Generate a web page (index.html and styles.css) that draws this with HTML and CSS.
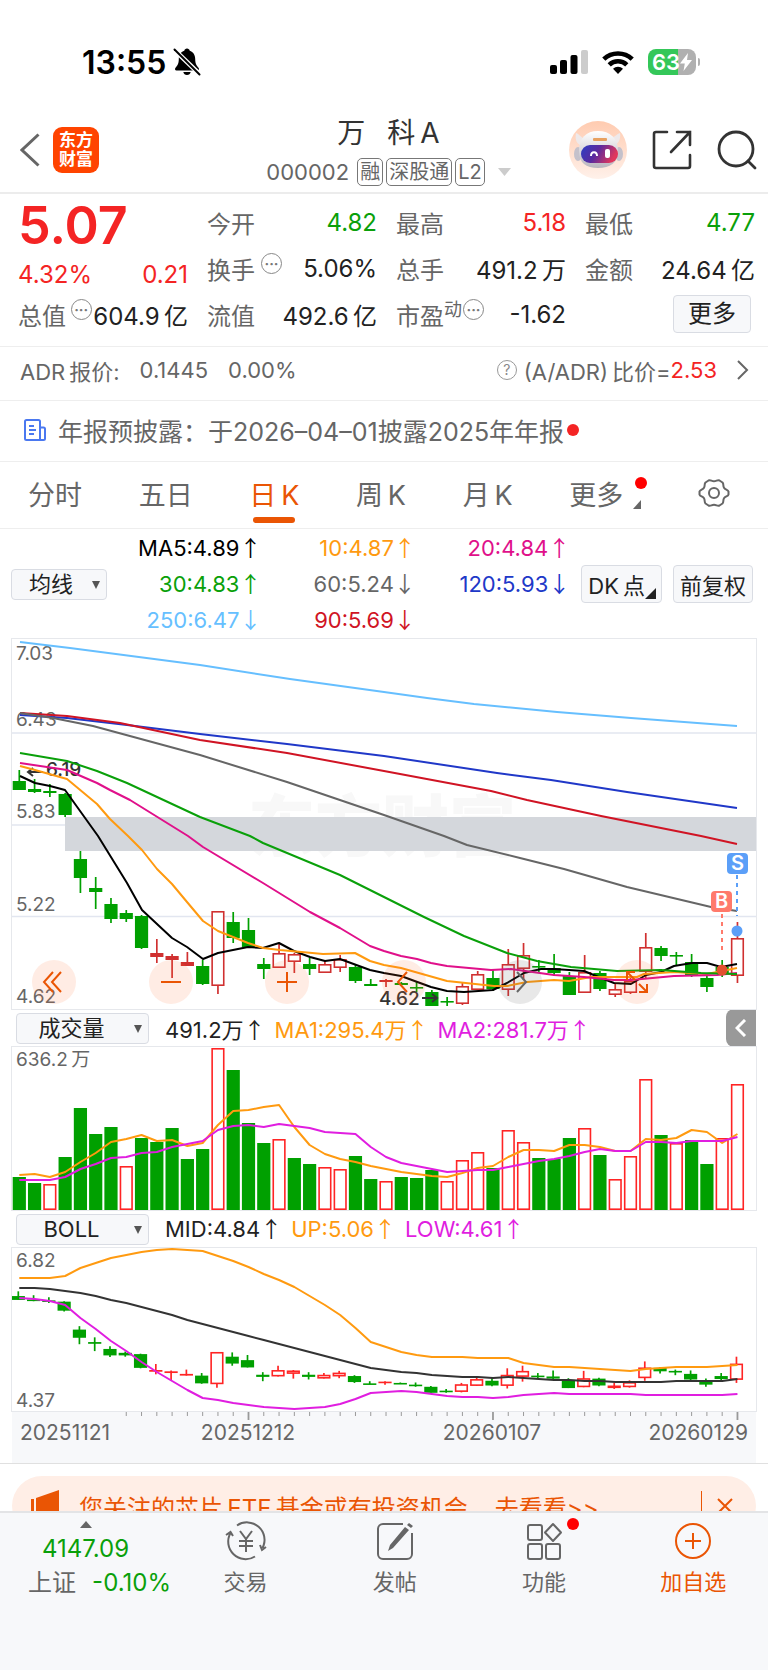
FILE: index.html
```html
<!DOCTYPE html>
<html lang="zh-CN">
<head>
    <meta charset="UTF-8">
    <meta name="viewport" content="width=device-width, initial-scale=1.0, viewport-fit=cover">
    <title>万科A 000002</title>
    <link rel="stylesheet" href="styles.css">
</head>
<body>
    <div class="status-bar">
        <div class="status-left">
            <span class="time">13:55</span>
            <svg width="28" height="28" viewBox="0 0 28 28">
                <path d="M14 0.500c-1.500 0-2.500 1-2.700 2.200C7.800 3.800 5.800 7 5.800 11c0 4.500-1.300 6.500-3.300 8.700-1 1.200-.5 2.800 1 2.800h21c1.500 0 2-1.600 1-2.800-2-2.200-3.300-4.200-3.300-8.700 0-4-2-7.200-5.500-8.300C16.500 1.500 15.500.5 14 .5zM10.300 24a3.800 3.800 0 0 0 7.400 0z" fill="#000"/>
                <path d="M1 1.500L27 26.500" stroke="#fff" stroke-width="4.600"/>
                <path d="M1.500 1.500L26.500 26.500" stroke="#000" stroke-width="2" stroke-linecap="round"/>
            </svg>
        </div>
        <div class="status-right">
            <svg width="38" height="24" viewBox="0 0 38 24">
                <rect x="0" y="15" width="7" height="9" rx="2"/>
                <rect x="10" y="10" width="7" height="14" rx="2"/>
                <rect x="20.500" y="5" width="7" height="19" rx="2"/>
                <rect x="31" y="0" width="7" height="24" rx="2" fill="#ccc"/>
            </svg>
            <svg width="32" height="24" viewBox="0 0 32 24" fill="none" stroke="#000" stroke-width="4.600">
                <path d="M1.800 9.200a20.500 20.500 0 0 1 28.400 0"/>
                <path d="M7.200 14.800a12.700 12.700 0 0 1 17.600 0"/>
                <path d="M16 24l-5-5.300a7.200 7.200 0 0 1 10 0z" fill="#000" stroke="none"/>
            </svg>
            <div class="battery">
                <span>63</span>
                <svg width="12" height="18" viewBox="0 0 12 18"><path d="M8 0L0 10.500h4.800L3.500 18 12 7H7z" fill="#fff"/></svg>
            </div>
        </div>
    </div>

    <header class="header">
        <div class="header-left">
            <button class="icon-btn" aria-label="返回">
                <svg width="20" height="34" viewBox="0 0 20 34" fill="none" stroke="#666" stroke-width="3"><path d="M18.500 1.500L2 17l16.500 15.500"/></svg>
            </button>
            <a class="logo" href="#">东方<br>财富</a>
        </div>
        <div class="header-title">
            <h1>万&ensp; 科&thinsp;A</h1>
            <div class="stock-code">
                <span class="code">000002</span>
                <span class="tag">融</span>
                <span class="tag">深股通</span>
                <span class="tag">L2</span>
                <svg class="code-arrow" width="13" height="8" viewBox="0 0 13 8"><path d="M0 0h13L6.500 8z" fill="#ccc"/></svg>
            </div>
        </div>
        <div class="header-right">
            <button class="icon-btn" aria-label="智能助手">
                <svg width="58" height="58" viewBox="0 0 58 58">
                    <defs>
                        <linearGradient id="halo" x1="0" y1="0" x2="0" y2="1"><stop offset="0" stop-color="#ffcbb0"/><stop offset="1" stop-color="#fff1ea"/></linearGradient>
                        <linearGradient id="visor" x1="0" y1="0" x2="1" y2="0.300"><stop offset="0" stop-color="#2b3fc4"/><stop offset="0.500" stop-color="#5b2a9e"/><stop offset="1" stop-color="#e0365c"/></linearGradient>
                        <linearGradient id="shell" x1="0" y1="0" x2="0" y2="1"><stop offset="0" stop-color="#fff"/><stop offset="1" stop-color="#b9b6be"/></linearGradient>
                    </defs>
                    <circle cx="29" cy="29" r="29" fill="url(#halo)"/>
                    <path d="M11 24c-4-2-5-7-4-12 3 1 5 4 8 6M46 24c4-2 6-7 5-12-3 1-6 4-9 6" fill="#eee9ea"/>
                    <ellipse cx="9" cy="33" rx="4" ry="7" fill="#c4c1cb"/>
                    <ellipse cx="50" cy="33" rx="4" ry="7" fill="#c4c1cb"/>
                    <path d="M29 10c-12 0-19 7-19 20 0 12 7 17 19 17s20-5 20-17c0-13-8-20-20-20z" fill="url(#shell)"/>
                    <rect x="24" y="17" width="14" height="3" rx="1" fill="#e8a160"/>
                    <rect x="12" y="24" width="37" height="18" rx="9" fill="url(#visor)"/>
                    <path d="M22 35c0-5 6-5 6 0" fill="none" stroke="#fff" stroke-width="2"/>
                    <rect x="36" y="28" width="5" height="9" rx="2" fill="#fff"/>
                </svg>
            </button>
            <button class="icon-btn" aria-label="分享">
                <svg width="40" height="40" viewBox="0 0 40 40" fill="none" stroke="#333" stroke-width="2.600" stroke-linecap="round">
                    <path d="M15 2H4a2 2 0 0 0-2 2v32a2 2 0 0 0 2 2h32a2 2 0 0 0 2-2V25M25 2h13v13M38 2L19 22"/>
                </svg>
            </button>
            <button class="icon-btn" aria-label="搜索">
                <svg width="40" height="40" viewBox="0 0 40 40" fill="none" stroke="#333" stroke-width="2.800" stroke-linecap="round">
                    <circle cx="19" cy="19" r="17"/><path d="M31 31l7 7"/>
                </svg>
            </button>
        </div>
    </header>

    <section class="quote">
        <div class="quote-col">
            <div class="price">5.07</div>
            <div class="change"><span>4.32%</span><span>0.21</span></div>
            <div class="quote-row"><span class="label">总值</span><i class="more-dot">···</i><span>604.9&thinsp;亿</span></div>
        </div>
        <div class="quote-col">
            <div class="quote-row"><span class="label">今开</span><span class="green">4.82</span></div>
            <div class="quote-row"><span class="label">换手</span><i class="more-dot">···</i><span>5.06%</span></div>
            <div class="quote-row"><span class="label">流值</span><span>492.6&thinsp;亿</span></div>
        </div>
        <div class="quote-col">
            <div class="quote-row"><span class="label">最高</span><span class="red">5.18</span></div>
            <div class="quote-row"><span class="label">总手</span><span>491.2&thinsp;万</span></div>
            <div class="quote-row pe"><span class="label">市盈<sup>动</sup></span><i class="more-dot">···</i><span>-1.62</span></div>
        </div>
        <div class="quote-col">
            <div class="quote-row"><span class="label">最低</span><span class="green">4.77</span></div>
            <div class="quote-row"><span class="label">金额</span><span>24.64&thinsp;亿</span></div>
            <div class="quote-row"><button class="box-btn more-btn">更多</button></div>
        </div>
    </section>

    <section class="adr">
        <span>ADR&thinsp;报价:</span>
        <span>0.1445</span>
        <span>0.00%</span>
        <span class="adr-ratio"><i class="question">?</i>(A/ADR)&thinsp;比价=<b>2.53</b></span>
        <svg width="12" height="20" viewBox="0 0 12 20" fill="none" stroke="#666" stroke-width="2"><path d="M1 1l9 9-9 9"/></svg>
    </section>

    <section class="notice">
        <svg width="22" height="22" viewBox="0 0 22 22" fill="none" stroke="#4a78f0" stroke-width="2">
            <path d="M16 21H2.500A1.500 1.500 0 0 1 1 19.500v-17A1.500 1.500 0 0 1 2.500 1h12A1.500 1.500 0 0 1 16 2.500zM16 8.500h3.500A1.500 1.500 0 0 1 21 10v9.500a1.500 1.500 0 0 1-1.500 1.500H16M5 7h5M5 11h7M5 15h5"/>
        </svg>
        <a href="#">年报预披露：于2026–04–01披露2025年年报</a>
        <i class="dot"></i>
    </section>

    <nav class="tabs">
        <button class="tab">分时</button>
        <button class="tab">五日</button>
        <button class="tab active">日&thinsp;K</button>
        <button class="tab">周&thinsp;K</button>
        <button class="tab">月&thinsp;K</button>
        <button class="tab tab-more">更多<i class="dot"></i></button>
        <button class="tab" aria-label="设置">
            <svg width="32" height="32" viewBox="0 0 32 32" fill="none" stroke="#666" stroke-width="2" stroke-linejoin="round">
                <path d="M10.500 3.500c2-1 3 .8 5.500.8s3.500-1.800 5.500-.8l3 2c1.500 1.500.2 3 1.500 5.200 1.200 2 4 1.800 4.500 3.800v3c-.5 2-3.300 1.800-4.500 3.800-1.300 2.200 0 3.700-1.500 5.200l-3 2c-2 1-3-.8-5.500-.8s-3.500 1.800-5.500.8l-3-2c-1.500-1.500-.2-3-1.500-5.200-1.200-2-4-1.800-4.500-3.800v-3c.5-2 3.300-1.800 4.500-3.800 1.300-2.200 0-3.700 1.500-5.200z"/>
                <circle cx="16" cy="16" r="5"/>
            </svg>
        </button>
    </nav>

    <section class="ma-bar">
        <label class="select-box"><select aria-label="主图指标"><option>均线</option></select></label>
        <div class="ma-values">
            <span class="ma5">MA5:4.89<i>↑</i></span>
            <span class="ma10">10:4.87<i>↑</i></span>
            <span class="ma20">20:4.84<i>↑</i></span>
            <span class="ma30">30:4.83<i>↑</i></span>
            <span class="ma60">60:5.24<i>↓</i></span>
            <span class="ma120">120:5.93<i>↓</i></span>
            <span class="ma250">250:6.47<i>↓</i></span>
            <span class="ma90">90:5.69<i>↓</i></span>
        </div>
        <button class="box-btn dk-btn">DK&thinsp;点</button>
        <button class="box-btn">前复权</button>
    </section>

    <main class="charts">
        <div class="price-chart">
            <svg class="chart" viewBox="0 0 744 370">
                <text class="watermark" x="236" y="212">东方财富</text>
                <rect x="53" y="178" width="691" height="34" fill="#d4d7dc"/>
                <path class="grid" d="M0 94h744M0 186h53M0 277.500h744"/>
                <g class="axis-label">
                    <text x="4" y="21">7.03</text>
                    <text x="4" y="87">6.43</text>
                    <text x="4" y="179">5.83</text>
                    <text x="4" y="272">5.22</text>
                    <text x="4" y="364">4.62</text>
                </g>
                <g id="candles"></g>
                <g class="mark-label">
                    <text x="34" y="137">6.19</text>
                    <path d="M31 133H16M21 129l-5 4 5 4"/>
                    <text x="367" y="366">4.62</text>
                    <path d="M410 359h15M420 355l5 4-5 4"/>
                </g>
                <g class="line">
                    <polyline stroke="#66bfff" points="8,3 58,9 188,26 278,40 372,53 415,59 462,65 545,73 619,79 725,87"/>
                    <polyline stroke="#2038c8" points="8,76 55,79 115,86 188,95 275,105 372,117 485,134 539,141 615,153 725,169"/>
                    <polyline stroke="#d01424" points="8,74 55,77 108,84 188,101 275,114 372,132 479,152 515,161 589,177 639,187 689,197 725,205"/>
                    <polyline stroke="#666" points="8,74 41,79 81,87 188,116 275,143 372,176 432,197 455,206 512,220 552,230 615,248 699,268 725,272"/>
                    <polyline stroke="#000" points="8,137 23,144 38,147 53,151 86,197 115,244 130,271 160,299 175,308 191,320 206,314 236,308 251,309 267,304 282,312 298,318 313,322 328,320 358,331 372,334 389,337 419,348 435,352 452,353 481,351 495,344 512,334 529,330 542,330 572,332 589,339 602,344 619,345 634,336 649,333 662,327 680,324 695,324 709,328 725,325"/>
                    <polyline stroke="#ff9a10" points="8,127 23,131 55,140 85,165 98,180 116,197 130,211 145,230 160,245 175,263 191,282 206,292 236,304 251,309 268,311 311,315 343,314 358,322 372,326 389,329 435,342 482,347 495,347 515,343 542,341 557,342 579,338 625,338 632,335 662,333 695,335 725,329"/>
                    <polyline stroke="#e0108a" points="8,124 55,131 85,144 98,151 118,161 176,197 191,208 251,244 298,273 328,289 358,307 372,312 389,317 405,320 419,324 435,327 479,331 499,330 542,336 572,338 602,341 619,341 662,337 705,336 725,334"/>
                    <polyline stroke="#0aa00a" points="8,114 55,122 85,132 115,144 188,178 238,197 251,204 328,236 372,258 412,278 452,297 495,314 525,322 559,328 605,332 649,331 689,334 725,335"/>
                </g>
                <g class="trade-mark">
                    <path d="M725 236v41" stroke="#5b9ff8"/>
                    <path d="M710 275v39" stroke="#ff7a6b"/>
                    <circle cx="725" cy="292" r="5.500" fill="#5b9ff8"/>
                    <circle cx="710" cy="331" r="5.500" fill="#e2512f"/>
                    <rect x="715" y="214" width="21" height="21" rx="4" fill="#5b9ff8"/>
                    <rect x="699" y="252" width="21" height="21" rx="4" fill="#ff7a6b"/>
                    <text x="725.500" y="231">S</text>
                    <text x="709.500" y="269">B</text>
                </g>
            </svg>
            <div class="chart-tools">
                <button aria-label="最早"><svg viewBox="0 0 44 44"><path d="M21 12L12 22l9 10M29 12l-9 10 9 10"/></svg></button>
                <button aria-label="缩小"><svg viewBox="0 0 44 44"><path d="M12 22h20"/></svg></button>
                <button aria-label="放大"><svg viewBox="0 0 44 44"><path d="M12 22h20M22 12v20"/></svg></button>
                <button aria-label="左移"><svg viewBox="0 0 44 44"><path d="M25 12l-9 10 9 10"/></svg></button>
                <button class="disabled" aria-label="右移"><svg viewBox="0 0 44 44"><path d="M19 12l9 10-9 10"/></svg></button>
                <button aria-label="全屏"><svg viewBox="0 0 44 44"><path d="M12 20v-8h8M12 12l8 8M32 24v8h-8M32 32l-8-8"/></svg></button>
            </div>
        </div>

        <div class="indicator-bar">
            <label class="select-box wide"><select aria-label="副图指标一"><option>成交量</option></select></label>
            <span>491.2万<i>↑</i></span>
            <span class="ma10">MA1:295.4万<i>↑</i></span>
            <span class="purple">MA2:281.7万<i>↑</i></span>
            <button class="fold-btn" aria-label="展开"><svg width="12" height="18" viewBox="0 0 12 18" fill="none" stroke="#fff" stroke-width="3"><path d="M10 1L2 9l8 8"/></svg></button>
        </div>
        <svg class="chart" viewBox="0 0 744 163">
            <g class="axis-label"><text x="4" y="19">636.2&thinsp;万</text></g>
            <g id="volumes"></g>
            <g id="volume-lines" class="line"></g>
        </svg>

        <div class="indicator-bar">
            <label class="select-box wide"><select aria-label="副图指标二"><option>BOLL</option></select></label>
            <span>MID:4.84<i>↑</i></span>
            <span class="ma10">UP:5.06<i>↑</i></span>
            <span class="purple">LOW:4.61<i>↑</i></span>
        </div>
        <svg class="chart" viewBox="0 0 744 163">
            <g class="axis-label"><text x="4" y="19">6.82</text><text x="4" y="159">4.37</text></g>
            <g id="boll-candles"></g>
            <g id="boll-lines" class="line"></g>
        </svg>
        <svg class="date-axis" viewBox="0 0 744 53">
            <g id="ticks" stroke="#999"></g>
            <text x="8" y="29">20251121</text>
            <text x="236" y="29" text-anchor="middle">20251212</text>
            <text x="480" y="29" text-anchor="middle">20260107</text>
            <text x="736" y="29" text-anchor="end">20260129</text>
        </svg>
    </main>

    <aside class="banner">
        <svg width="30" height="32" viewBox="0 0 30 32" fill="#ea5504"><path d="M0 9h3v14H0zM5 8L28 0v32L5 24z"/></svg>
        <span>您关注的芯片&thinsp;ETF&thinsp;基金或有投资机会</span>
        <a href="#">去看看&gt;&gt;</a>
        <button class="banner-close" aria-label="关闭">
            <svg width="16" height="16" viewBox="0 0 16 16" stroke="#ea5504" stroke-width="2"><path d="M1 1l14 14M15 1L1 15"/></svg>
        </button>
    </aside>

    <footer class="bottom-nav">
        <a class="index" href="#">
            <svg width="12" height="7" viewBox="0 0 12 7"><path d="M6 0l6 7H0z" fill="#666"/></svg>
            <span class="green">4147.09</span>
            <span class="index-row">上证 <em class="green">-0.10%</em></span>
        </a>
        <a class="nav-item" href="#">
            <svg width="42" height="40" viewBox="0 0 42 40" fill="none" stroke="#666" stroke-width="2">
                <path d="M12 4.500A17.500 17.500 0 0 1 37.500 27M30 35.500A17.500 17.500 0 0 1 5.500 12M1 14l4.500-3 2.500 4M41 26l-4 3-2-5M15 10l6 8 6-8M21 18v13M14 20h14M14 25h14"/>
            </svg>
            交易
        </a>
        <a class="nav-item" href="#">
            <svg width="40" height="40" viewBox="0 0 40 40" fill="none" stroke="#666" stroke-width="2">
                <path d="M28 3H8a5 5 0 0 0-5 5v25a5 5 0 0 0 5 5h24a5 5 0 0 0 5-5V12"/>
                <path d="M30 6l4 3-16 18-5 3 2-6zM32 4l2-2 4 3-2 2z" fill="#666" stroke="none"/>
            </svg>
            发帖
        </a>
        <a class="nav-item" href="#">
            <svg width="40" height="40" viewBox="0 0 40 40" fill="none" stroke="#666" stroke-width="2">
                <rect x="4" y="4" width="14" height="15" rx="2"/><rect x="4" y="23" width="14" height="15" rx="2"/><rect x="22" y="23" width="14" height="15" rx="2"/>
                <path d="M29 3l8 8.500-8 8.500-8-8.500z" stroke-linejoin="round"/>
            </svg>
            <i class="dot"></i>
            功能
        </a>
        <a class="nav-item orange" href="#">
            <svg width="40" height="40" viewBox="0 0 40 40" fill="none" stroke="#ea5504" stroke-width="2">
                <circle cx="20" cy="20" r="17"/><path d="M12 20h16M20 12v16"/>
            </svg>
            加自选
        </a>
    </footer>

    <script src="script.js"></script>
</body>
</html>
```

FILE: styles.css
```css
* {
    margin: 0;
    padding: 0;
    box-sizing: border-box;
}
body {
    font-family: Inter, "Noto Sans CJK SC", sans-serif;
    font-size: 24px;
    color: #222;
    background-color: #fff;
    padding-bottom: 131px;
}
button, select {
    font: inherit;
    color: inherit;
    background: none;
    border: none;
}
a {
    color: inherit;
    text-decoration: none;
}
i, em {
    font-style: normal;
}
svg {
    display: block;
    flex-shrink: 0;
}
.green {
    color: #0aa00a;
}
.red {
    color: #f42424;
}
.orange {
    color: #ea5504;
}
.purple {
    color: #e01ee0;
}
.dot {
    width: 12px;
    height: 12px;
    border-radius: 50%;
    background-color: #f00;
}

/* status bar */
.status-bar {
    display: flex;
    justify-content: space-between;
    align-items: center;
    height: 100px;
    padding: 24px 72px 0 82px;
    color: #000;
}
.status-left, .status-right {
    display: flex;
    align-items: center;
}
.status-left {
    gap: 7px;
}
.status-right {
    gap: 14px;
}
.time {
    font-size: 32px;
    font-weight: 600;
}
.battery {
    position: relative;
    display: flex;
    align-items: center;
    justify-content: center;
    width: 48px;
    height: 26px;
    border-radius: 8px;
    background: linear-gradient(90deg, #34c759 63%, #b0b0b0 63%);
    color: #fff;
    font-size: 22px;
    font-weight: 600;
}
.battery::after {
    content: '';
    position: absolute;
    right: -4px;
    width: 2px;
    height: 8px;
    border-radius: 0 2px 2px 0;
    background-color: #b0b0b0;
}

/* header */
.header {
    display: grid;
    grid-template-columns: 1fr auto 1fr;
    align-items: center;
    height: 94px;
    padding: 7px 11px 0 20px;
    border-bottom: 2px solid #ececec;
}
.header-left, .header-right {
    display: flex;
    align-items: center;
}
.header-left {
    gap: 13px;
}
.header-right {
    justify-content: flex-end;
    gap: 25px;
}
.icon-btn {
    cursor: pointer;
}
.logo {
    width: 46px;
    height: 46px;
    padding-top: 4px;
    border-radius: 9px;
    background-color: #ff4400;
    color: #fff;
    font-size: 17px;
    font-weight: 700;
    line-height: 19px;
    text-align: center;
}
.header-title {
    text-align: center;
}
h1 {
    font-size: 28px;
    font-weight: 400;
    line-height: 40px;
    color: #333;
    margin-bottom: 5px;
}
.stock-code {
    display: flex;
    align-items: center;
    gap: 3px;
    color: #666;
    font-size: 22px;
    line-height: 28px;
}
.code {
    margin-right: 5px;
}
.tag {
    height: 28px;
    padding: 0 2px;
    border: 1px solid #777;
    border-radius: 5px;
    font-size: 20px;
    line-height: 26px;
}
.code-arrow {
    margin-left: 10px;
}

/* quote */
.quote {
    display: grid;
    grid-template-columns: repeat(4, 1fr);
    gap: 19px;
    padding: 5px 13px 9px 18px;
    border-bottom: 1px solid #eee;
}
.quote-row, .change {
    display: flex;
    align-items: center;
    justify-content: space-between;
    height: 46px;
    white-space: nowrap;
}
.price {
    height: 54px;
    font-size: 52px;
    font-weight: 600;
    line-height: 54px;
    color: #f42424;
}
.change {
    height: 38px;
    padding-top: 4px;
    color: #f42424;
}
.label {
    color: #666;
}
.label sup {
    font-size: 18px;
    line-height: 18px;
}
.more-dot {
    width: 21px;
    height: 21px;
    margin: 0 auto 10px 6px;
    border: 1px solid #888;
    border-radius: 50%;
    color: #777;
    font-size: 14px;
    font-weight: 700;
    line-height: 19px;
    text-align: center;
}
.quote-col:first-child .more-dot {
    margin: 0 0 10px 3px;
}
.pe .more-dot {
    margin-left: 1px;
}
.box-btn {
    height: 38px;
    margin-left: 11px;
    padding: 0 6px;
    border: 1px solid #d9dce3;
    border-radius: 4px;
    background-color: #f7f8fa;
    font-size: 22px;
    white-space: nowrap;
    cursor: pointer;
}
.more-btn {
    margin: 0 4px 0 auto;
    padding: 0 14px;
    font-size: 24px;
    line-height: 34px;
    color: #222;
}

/* adr + notice */
.adr, .notice {
    display: flex;
    align-items: center;
    border-bottom: 1px solid #eee;
    color: #666;
}
.adr {
    gap: 20px;
    height: 54px;
    padding: 0 19px 8px 20px;
    font-size: 22px;
}
.adr-ratio {
    display: flex;
    align-items: center;
    margin-left: auto;
    white-space: pre;
}
.adr-ratio b {
    font-weight: 400;
    color: #f42424;
}
.question {
    width: 20px;
    height: 20px;
    margin-right: 7px;
    border: 1px solid #999;
    border-radius: 50%;
    font-size: 14px;
    line-height: 18px;
    text-align: center;
    color: #888;
}
.notice {
    height: 61px;
    padding: 0 0 3px 24px;
    font-size: 25px;
}
.notice a {
    margin-left: 12px;
}
.notice .dot {
    margin-left: 3px;
    background-color: #f42424;
}

/* tabs */
.tabs {
    display: flex;
    justify-content: space-between;
    height: 67px;
    padding: 0 38px 0 28px;
    border-bottom: 1px solid #eee;
}
.tab {
    position: relative;
    padding-bottom: 4px;
    font-size: 27px;
    color: #666;
    cursor: pointer;
}
.tab.active {
    color: #ea5504;
}
.tab.active::after {
    content: '';
    position: absolute;
    left: 4px;
    right: 4px;
    bottom: 5px;
    height: 6px;
    border-radius: 3px;
    background-color: #ea5504;
}
.tab-more {
    padding-right: 18px;
}
.tab-more .dot {
    position: absolute;
    right: -6px;
    top: 15px;
}
.tab-more::after {
    content: '';
    position: absolute;
    right: 0;
    bottom: 19px;
    border-left: 8px solid transparent;
    border-bottom: 9px solid #666;
}

/* moving averages */
.ma-bar {
    display: flex;
    align-items: center;
    height: 110px;
    padding: 0 15px 0 11px;
    font-size: 22px;
}
.select-box {
    position: relative;
    flex-shrink: 0;
    width: 96px;
    height: 31px;
    border: 1px solid #d9dce3;
    border-radius: 4px;
    background-color: #f7f8fa;
}
.select-box select {
    appearance: none;
    width: 100%;
    height: 29px;
    padding-right: 16px;
    font-size: 22px;
    line-height: 29px;
    text-align: center;
    text-align-last: center;
}
.select-box::after {
    content: '';
    position: absolute;
    right: 6px;
    top: 11px;
    border: 4px solid transparent;
    border-top: 8px solid #555;
    border-bottom: none;
}
.wide {
    width: 133px;
}
.wide select {
    padding-right: 22px;
}
.ma-values {
    flex: 1;
    display: grid;
    grid-template-columns: repeat(3, 1fr);
    line-height: 36px;
    text-align: right;
    white-space: nowrap;
}
.ma-values i, .indicator-bar i {
    font-family: "Noto Sans CJK SC", sans-serif;
    line-height: 20px;
}
.ma5 {
    color: #000;
}
.ma10 {
    color: #ff9a10;
}
.ma20 {
    color: #e0108a;
}
.ma30 {
    color: #0aa00a;
}
.ma60 {
    color: #666;
}
.ma120 {
    color: #2038c8;
}
.ma250 {
    color: #66bfff;
}
.ma90 {
    color: #d01424;
}
.dk-btn {
    position: relative;
    padding-right: 16px;
}
.dk-btn::after {
    content: '';
    position: absolute;
    right: 5px;
    bottom: 3px;
    border-left: 11px solid transparent;
    border-bottom: 11px solid #222;
}

/* charts */
.charts {
    margin: 0 12px;
}
.price-chart {
    position: relative;
}
.chart {
    width: 100%;
    outline: 1px solid #e6e8ec;
}
.grid {
    stroke: #e2e6f0;
    stroke-width: 1.5;
    fill: none;
}
.watermark {
    font-size: 67px;
    font-weight: 900;
    fill: #f8f8f8;
}
.axis-label {
    font-size: 19px;
    fill: #666;
}
.mark-label {
    font-size: 19px;
    font-weight: 500;
    fill: #333;
}
.mark-label path {
    fill: none;
    stroke: #333;
    stroke-width: 2;
}
.line {
    fill: none;
    stroke-width: 2;
    stroke-linejoin: round;
}
.trade-mark path {
    stroke-width: 2;
    stroke-dasharray: 4 4;
}
.trade-mark text {
    font-size: 20px;
    font-weight: 600;
    fill: #fff;
    text-anchor: middle;
}
.chart-tools {
    position: absolute;
    left: 20px;
    right: 97px;
    bottom: 5px;
    display: flex;
    justify-content: space-between;
}
.chart-tools button {
    width: 44px;
    height: 44px;
    border-radius: 50%;
    background-color: rgba(255, 110, 50, 0.13);
    cursor: pointer;
}
.chart-tools svg {
    fill: none;
    stroke: #ea5504;
    stroke-width: 2;
}
.chart-tools .disabled {
    background-color: rgba(100, 100, 100, 0.15);
}
.chart-tools .disabled svg {
    stroke: #666;
}
.indicator-bar {
    display: flex;
    align-items: center;
    gap: 9px;
    height: 38px;
    padding-left: 4px;
    font-size: 22px;
    white-space: nowrap;
}
.indicator-bar .select-box {
    margin-right: 7px;
}
.fold-btn {
    display: flex;
    align-items: center;
    justify-content: center;
    width: 30px;
    height: 38px;
    margin-left: auto;
    border-radius: 8px 0 0 8px;
    background-color: #999;
    cursor: pointer;
}
.date-axis {
    width: 100%;
    background-color: #f7f8fa;
    font-size: 21px;
    fill: #666;
}

/* banner */
.banner {
    display: flex;
    align-items: center;
    height: 60px;
    margin: 12px;
    padding: 0 23px 0 19px;
    border-radius: 30px;
    background-color: #ffeee6;
    color: #ea5504;
    position: relative;
}
.banner::before {
    content: '';
    position: absolute;
    left: -12px;
    right: -12px;
    top: -13px;
    border-top: 1px solid #e0e0e0;
}
.banner span {
    margin: 0 27px 0 18px;
}
.banner-close {
    height: 30px;
    margin-left: auto;
    padding-left: 15px;
    border-left: 1px solid #ea5504;
    cursor: pointer;
}

/* bottom nav */
.bottom-nav {
    position: fixed;
    left: 0;
    right: 0;
    bottom: 0;
    display: grid;
    grid-template-columns: 171px repeat(4, 1fr);
    align-items: start;
    height: 159px;
    border-top: 2px solid #e3e4e6;
    background-color: #f7f8fa;
}
.index, .nav-item {
    position: relative;
    display: flex;
    flex-direction: column;
    align-items: center;
    padding-top: 8px;
    font-size: 22px;
    line-height: 34px;
}
.index {
    font-size: 24px;
}
.nav-item {
    gap: 4px;
    color: #666;
}
.nav-item.orange {
    color: #ea5504;
}
.index svg {
    margin-bottom: 4px;
}
.index-row {
    display: flex;
    justify-content: space-between;
    width: 143px;
    margin-left: 28px;
    align-self: flex-start;
    color: #666;
}
.nav-item .dot {
    position: absolute;
    left: 50%;
    top: 5px;
    margin-left: 23px;
}
```

FILE: script.js
```js
const STEP = 15.28;
const GREEN = "#00a000";
const RED = "#ff2424";

// [type, high, body top, body bottom, low], g = down, r = up (flat body), h = up (hollow body)
const candles = [
    ["g", 131, 142, 151, 151], ["g", 140, 150, 153, 154], ["g", 145, 152, 154, 158], ["g", 154, 155, 176, 178],
    ["g", 212, 220, 239, 254], ["g", 238, 249, 253, 270], ["g", 259, 265, 280, 284], ["g", 271, 274, 280, 283],
    ["g", 276, 277, 309, 310], ["r", 300, 314, 318, 324], ["r", 315, 317, 321, 339], ["r", 313, 323, 327, 327],
    ["g", 321, 327, 345, 346], ["h", 272, 272, 347, 355], ["g", 273, 283, 299, 304], ["g", 279, 291, 308, 308],
    ["g", 319, 325, 330, 340], ["h", 304, 314, 329, 329], ["h", 314, 315, 323, 334], ["g", 319, 325, 330, 336],
    ["h", 321, 325, 334, 334], ["h", 316, 320, 329, 333], ["g", 326, 328, 342, 344], ["g", 340, 345, 347, 347],
    ["r", 340, 341, 343, 348], ["g", 343, 344, 346, 346], ["g", 343, 348, 349, 353], ["g", 351, 353, 367, 367],
    ["g", 358, 362, 363, 367], ["h", 344, 347, 365, 366], ["h", 332, 335, 351, 351], ["g", 331, 339, 350, 352],
    ["h", 310, 325, 351, 357], ["h", 304, 316, 330, 341], ["g", 321, 327, 328, 333], ["g", 315, 329, 334, 337],
    ["g", 333, 337, 356, 356], ["h", 316, 333, 354, 354], ["g", 332, 334, 350, 352], ["h", 344, 350, 356, 358],
    ["h", 338, 342, 354, 355], ["h", 294, 308, 333, 339], ["g", 307, 309, 317, 322], ["g", 313, 316, 317, 326],
    ["g", 315, 323, 336, 338], ["g", 334, 339, 348, 353], ["g", 321, 328, 335, 338], ["h", 283, 299, 337, 344]
];

const volumes = [
    33, 27, 26, 53, 102, 76, 83, 44, 72, 68, 82, 51, 61, 162, 140, 87, 67, 71, 52, 46, 43, 41, 54, 31,
    29, 33, 32, 40, 29, 50, 58, 42, 80, 68, 52, 51, 72, 82, 55, 31, 54, 131, 75, 67, 70, 46, 72, 126
];
const upDays = [2, 7, 13, 17, 20, 21, 24, 28, 29, 30, 32, 33, 37, 39, 40, 41, 43, 46, 47];

const volumeLines = {
    "#ff9a10": [128, 127, 130, 125, 115, 106, 95, 92, 88, 94, 93, 99, 96, 78, 64, 63, 60, 58, 80, 98, 107, 112, 115, 119, 122, 125, 127, 129, 130, 126, 121, 119, 110, 103, 103, 104, 98, 98, 100, 104, 104, 92, 93, 91, 83, 85, 96, 87],
    "#e01ee0": [133, 133, 133, 130, 122, 117, 111, 110, 106, 105, 100, 97, 94, 83, 79, 78, 80, 77, 79, 81, 85, 86, 87, 100, 110, 116, 119, 122, 125, 124, 123, 123, 120, 117, 114, 112, 109, 105, 102, 104, 104, 95, 95, 96, 94, 94, 94, 90]
};
const bollLines = {
    "#ff9a10": [30, 30, 30, 28, 20, 15, 10, 7, 4, 2, 1, 2, 3, 8, 13, 19, 26, 32, 39, 48, 57, 67, 80, 94, 99, 104, 107, 109, 109, 109, 110, 110, 110, 115, 117, 119, 119, 120, 121, 122, 123, 121, 120, 119, 119, 119, 118, 117],
    "#333": [40, 40, 41, 43, 45, 48, 52, 55, 59, 63, 67, 72, 76, 80, 84, 88, 92, 96, 100, 104, 108, 112, 116, 120, 122, 124, 125, 127, 128, 129, 129, 130, 129, 130, 131, 132, 132, 133, 133, 134, 134, 134, 134, 133, 133, 133, 133, 131],
    "#e01ee0": [50, 51, 53, 57, 70, 81, 93, 103, 114, 124, 133, 142, 150, 152, 155, 157, 159, 160, 161, 160, 159, 156, 151, 145, 144, 143, 144, 146, 148, 149, 149, 150, 149, 147, 146, 145, 146, 146, 146, 146, 146, 147, 147, 147, 147, 147, 147, 146]
};

function centerX(i) {
    return 7.3 + i * STEP;
}

function bar(x, top, height, color, hollow) {
    if (hollow) {
        return `<rect x="${x - 5.8}" y="${top + 0.8}" width="11.6" height="${Math.max(height - 1.6, 1)}" fill="#fff" stroke="${color}" stroke-width="1.6"/>`;
    }
    return `<rect x="${x - 6.6}" y="${top}" width="13.2" height="${height}" fill="${color}"/>`;
}

function drawCandles(id, red, scaleY, dx) {
    document.getElementById(id).innerHTML = candles.map(([type, ...values], i) => {
        const [high, top, bottom, low] = values.map(scaleY);
        const x = centerX(i) + dx;
        const color = type === "g" ? GREEN : red;
        return `<path d="M${x} ${high}V${low}" stroke="${color}" stroke-width="1.7"/>`
            + bar(x, top, Math.max(bottom - top, 1.6), color, type === "h");
    }).join("");
}

function drawLines(id, lines) {
    document.getElementById(id).innerHTML = Object.entries(lines).map(([color, values]) =>
        `<polyline stroke="${color}" points="${values.map((y, i) => `${centerX(i)},${y}`).join(" ")}"/>`
    ).join("");
}

drawCandles("candles", "#d03030", y => y, 0);
drawCandles("boll-candles", RED, y => y * 0.43 - 13, -1);
drawLines("volume-lines", volumeLines);
drawLines("boll-lines", bollLines);

document.getElementById("volumes").innerHTML = volumes.map((v, i) => {
    const up = upDays.includes(i);
    return bar(centerX(i), 163 - v, v, up ? RED : GREEN, up);
}).join("");

let ticks = "";
for (let i = 7; i < 48; i++) {
    const major = i % 16 === 15;
    ticks += `<path d="M${centerX(i)} 0v${major ? 9 : 5}" stroke-width="${major ? 1.8 : 1}"/>`;
}
document.getElementById("ticks").innerHTML = ticks;
```
